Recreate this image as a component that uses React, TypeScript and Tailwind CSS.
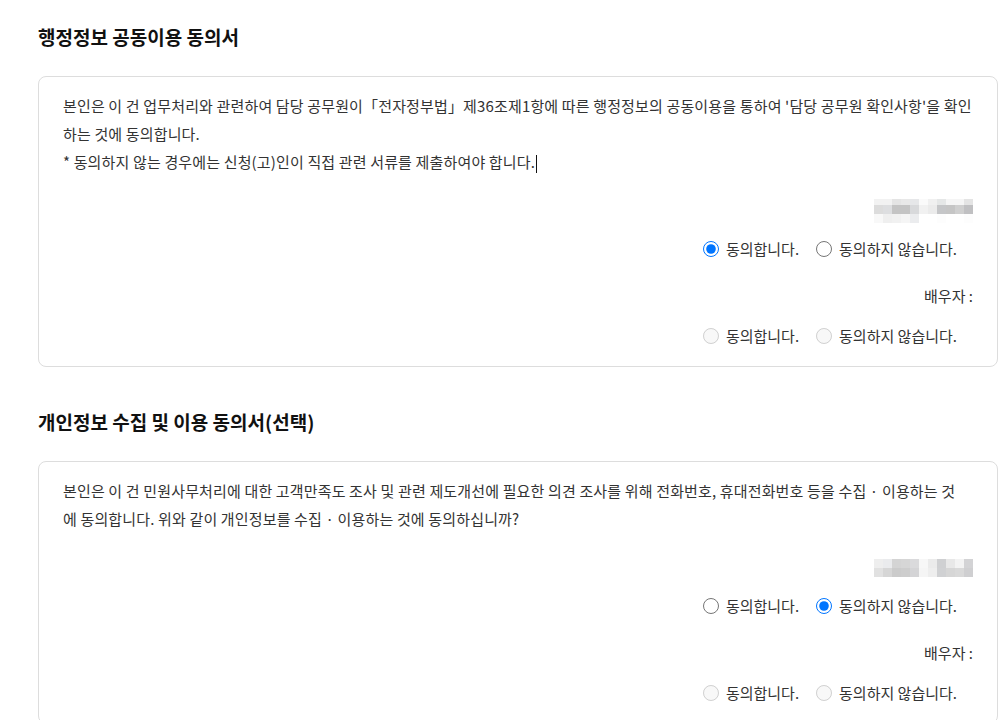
import React from "react";

const font = { fontFamily: '"Noto Sans CJK KR", "Noto Sans", sans-serif' };

const blur1: { h: string; cells: string[] }[] = [
  { h: "h-[6px]", cells: ["bg-[#f2f2f2]", "bg-[#f2f2f2]", "bg-[#e4e4e4]", "bg-[#e8e8e8]", "bg-[#e6e7e9]", "bg-[#fafafa]", "bg-[#f0f0f0]", "bg-[#e5e7e7]", "bg-[#f5f5f5]", "bg-[#f5f5f5]", "bg-[#e4e4e4]"] },
  { h: "h-[9px]", cells: ["bg-[#dcdcdc]", "bg-[#dddee0]", "bg-[#c4c4c4]", "bg-[#c4c4c4]", "bg-[#d8d9db]", "bg-[#f1f1f1]", "bg-[#ebebeb]", "bg-[#c5c6c8]", "bg-[#c5c5c5]", "bg-[#cfcfcf]", "bg-[#c0c0c2]"] },
  { h: "h-[9px]", cells: ["bg-[#f8f8f8]", "bg-[#efefef]", "bg-[#f1f1f1]", "bg-[#f5f5f5]", "bg-[#ebecee]", "bg-[#ffffff]", "bg-[#ffffff]", "bg-[#fdfdfd]", "bg-[#ffffff]", "bg-[#ffffff]", "bg-[#fdfdfd]"] },
];

const blur2: { h: string; cells: string[] }[] = [
  { h: "h-[9px]", cells: ["bg-[#eeeeee]", "bg-[#eaebed]", "bg-[#d4d4d4]", "bg-[#d6d6d6]", "bg-[#dadadc]", "bg-[#f7f7f7]", "bg-[#ebebeb]", "bg-[#cfd0d2]", "bg-[#e8e8e8]", "bg-[#f3f3f3]", "bg-[#d3d3d5]"] },
  { h: "h-[9px]", cells: ["bg-[#e1e1e1]", "bg-[#d6d6d6]", "bg-[#cbcbcb]", "bg-[#cdcdcd]", "bg-[#d4d4d6]", "bg-[#f5f5f5]", "bg-[#eeeeee]", "bg-[#d0d1d3]", "bg-[#d6d6d6]", "bg-[#d9d9d9]", "bg-[#cfcfd1]"] },
];

function Blur({ rows }: { rows: { h: string; cells: string[] }[] }) {
  return (
    <div className="flex flex-col">
      {rows.map((r, i) => (
        <div key={i} className="flex">
          {r.cells.map((c, j) => (
            <div key={j} className={`w-[9px] ${r.h} ${c}`} />
          ))}
        </div>
      ))}
    </div>
  );
}

function RadioRow({
  name,
  checked,
  disabled,
}: {
  name: string;
  checked?: "yes" | "no";
  disabled?: boolean;
}) {
  return (
    <div className="flex h-6 items-center justify-end gap-[17px] pr-4">
      <label className="flex items-center gap-[7px]">
        <input
          type="radio"
          name={name}
          defaultChecked={checked === "yes"}
          disabled={disabled}
          className="m-0 h-[16px] w-[16px]"
        />
        <span>동의합니다.</span>
      </label>
      <label className="flex items-center gap-[7px]">
        <input
          type="radio"
          name={name}
          defaultChecked={checked === "no"}
          disabled={disabled}
          className="m-0 h-[16px] w-[16px]"
        />
        <span>동의하지 않습니다.</span>
      </label>
    </div>
  );
}

function Card({
  lines,
  blur,
  id,
  checked,
  caret,
}: {
  lines: string[];
  blur: { h: string; cells: string[] }[];
  id: string;
  checked: "yes" | "no";
  caret?: boolean;
}) {
  return (
    <div className="w-[960px] rounded-lg border border-[#dddddd] bg-white px-6 pb-[18px] pt-[15px]">
      <div className="whitespace-nowrap text-[15px] leading-[28px] tracking-[0.15px] text-[#333333]">
        {lines.map((l, i) => (
          <div key={i}>
            {l}
            {caret && i === lines.length - 1 && (
              <span className="ml-px inline-block h-[18px] w-px bg-[#111111] align-middle" />
            )}
          </div>
        ))}
      </div>
      <div className="mt-[23px] flex h-6 items-center justify-end">
        <Blur rows={blur} />
      </div>
      <div className="mt-[14px] text-[15px] text-[#333333]">
        <RadioRow name={`${id}-a`} checked={checked} />
      </div>
      <div className="mt-[23px] flex h-6 items-center justify-end text-[15px] text-[#333333]">
        배우자 :
      </div>
      <div className="mt-4 text-[15px] text-[#333333]">
        <RadioRow name={`${id}-b`} disabled />
      </div>
    </div>
  );
}

export default function App() {
  return (
    <div className="min-h-screen w-[1008px] overflow-hidden bg-white pl-[38px] pt-[25px]" style={font}>
      <h2 className="h-6 text-[19px] font-bold leading-6 text-[#111111]">
        행정정보 공동이용 동의서
      </h2>
      <div className="mt-[27px]">
        <Card
          id="c1"
          checked="yes"
          caret
          blur={blur1}
          lines={[
            "본인은 이 건 업무처리와 관련하여 담당 공무원이「전자정부법」제36조제1항에 따른 행정정보의 공동이용을 통하여 '담당 공무원 확인사항'을 확인",
            "하는 것에 동의합니다.",
            "* 동의하지 않는 경우에는 신청(고)인이 직접 관련 서류를 제출하여야 합니다.",
          ]}
        />
      </div>
      <h2 className="mt-[43px] h-6 text-[19px] font-bold leading-6 text-[#111111]">
        개인정보 수집 및 이용 동의서(선택)
      </h2>
      <div className="mt-[27px]">
        <Card
          id="c2"
          checked="no"
          blur={blur2}
          lines={[
            "본인은 이 건 민원사무처리에 대한 고객만족도 조사 및 관련 제도개선에 필요한 의견 조사를 위해 전화번호, 휴대전화번호 등을 수집 · 이용하는 것",
            "에 동의합니다. 위와 같이 개인정보를 수집 · 이용하는 것에 동의하십니까?",
          ]}
        />
      </div>
    </div>
  );
}
